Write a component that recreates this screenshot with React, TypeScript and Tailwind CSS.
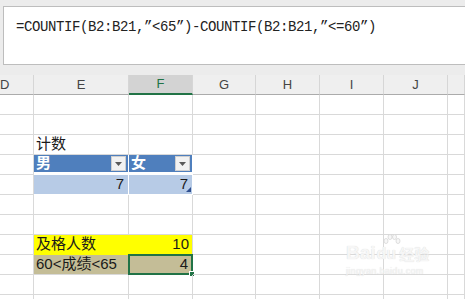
import React from "react";
import clsx from "clsx";

const widths = [
  "w-[34px]",
  "w-[95px]",
  "w-[64px]",
  "w-[63px]",
  "w-[64px]",
  "w-[64px]",
  "w-[64px]",
  "flex-1",
];

const letters = ["D", "E", "F", "G", "H", "I", "J", ""];

const cellFont = { fontFamily: '"Liberation Sans", "Noto Sans CJK SC", sans-serif' };

function Cell({
  col,
  className,
  children,
}: {
  col: number;
  className?: string;
  children?: React.ReactNode;
}) {
  return (
    <div
      className={clsx(
        "relative h-[20px] shrink-0 border-r border-b border-[#d9d9d9] flex items-center text-[15px] text-[#1a1a1a] overflow-visible whitespace-nowrap",
        widths[col],
        className
      )}
      style={cellFont}
    >
      {children}
    </div>
  );
}

function Row({ cells = {} }: { cells?: Record<number, { className?: string; content?: React.ReactNode }> }) {
  return (
    <div className="flex">
      {widths.map((_, i) => (
        <Cell key={i} col={i} className={cells[i]?.className}>
          {cells[i]?.content}
        </Cell>
      ))}
    </div>
  );
}

function Dropdown() {
  return (
    <div className="ml-auto mr-[2px] w-[15px] h-[15px] bg-[#f2f2f2] border border-[#cfcfcf] flex items-center justify-center">
      <svg width="7" height="4" viewBox="0 0 7 4">
        <path d="M0 0 L7 0 L3.5 4 Z" fill="#5a5a5a" />
      </svg>
    </div>
  );
}

export default function App() {
  return (
    <div className="relative w-[465px] h-[299px] overflow-hidden bg-white select-none">
      {/* formula bar */}
      <div className="bg-[#ececec] pt-[6px] pl-[3px] pb-[10px]">
        <div className="h-[59px] bg-white border border-r-0 border-[#bdbdbd] pl-[12px] pt-[6px]">
          <span
            className="text-[14px] tracking-[-0.4px] text-[#222]"
            style={{ fontFamily: '"Liberation Mono", "Noto Sans CJK SC", monospace' }}
          >
            =COUNTIF(B2:B21,”&lt;65”)-COUNTIF(B2:B21,”&lt;=60”)
          </span>
        </div>
      </div>

      {/* column headers */}
      <div className="flex h-[20px] bg-[#efefef]">
        {widths.map((w, i) => (
          <div
            key={i}
            className={clsx(
              "shrink-0 h-full flex items-center justify-center text-[13px] border-r border-[#d6d6d6]",
              w,
              i === 2
                ? "bg-[#d3d3d3] text-[#217346] border-b-2 border-b-[#217346]"
                : "text-[#444] border-b border-b-[#ababab]"
            )}
            style={{ fontFamily: '"Liberation Sans", sans-serif' }}
          >
            {i === 0 ? <span className="-ml-[60px] mr-auto pl-[60px]">{letters[i]}</span> : letters[i]}
          </div>
        ))}
      </div>

      <Row />
      <Row />
      <Row cells={{ 1: { className: "pl-[2px]", content: "计数" } }} />
      <Row
        cells={{
          1: {
            className: "bg-[#4f7fbd] border-white border-b-[3px] text-white pl-[2px]",
            content: (
              <>
                <span className="font-semibold">男</span>
                <Dropdown />
              </>
            ),
          },
          2: {
            className: "bg-[#4f7fbd] border-white border-b-[3px] text-white pl-[2px]",
            content: (
              <>
                <span className="font-semibold">女</span>
                <Dropdown />
              </>
            ),
          },
        }}
      />
      <Row
        cells={{
          1: { className: "bg-[#b7cbe6] border-white justify-end pr-[4px]", content: "7" },
          2: {
            className: "bg-[#b7cbe6] border-white justify-end pr-[4px]",
            content: (
              <>
                7
                <svg className="absolute right-[1px] bottom-[2px]" width="5" height="5" viewBox="0 0 5 5">
                  <path d="M5 0 L5 5 L0 5 Z" fill="#2f4f8f" />
                </svg>
              </>
            ),
          },
        }}
      />
      <Row />
      <Row />
      <Row
        cells={{
          1: { className: "bg-[#ffff00] border-[#ffff00] pl-[2px]", content: "及格人数" },
          2: { className: "bg-[#ffff00] border-r-[#d9d9d9] border-b-[#ffff00] justify-end pr-[3px]", content: "10" },
        }}
      />
      <Row
        cells={{
          1: { className: "bg-[#c4bd97] border-[#c4bd97] pl-[2px]", content: "60<成绩<65" },
          2: {
            className: "bg-[#c4bd97] border-[#c4bd97] justify-end pr-[4px]",
            content: (
              <>
                4
                <div className="absolute -left-[1px] -top-[1px] -right-[1px] -bottom-[1px] border-2 border-[#217346]" />
                <div className="absolute -right-[3px] -bottom-[3px] w-[6px] h-[6px] bg-[#217346] border border-white" />
              </>
            ),
          },
        }}
      />
      <Row />
      <Row />

      {/* watermark */}
      <div className="absolute left-[346px] top-[243px] pointer-events-none" style={cellFont}>
        <div className="flex items-end text-[#f6f6f6] [text-shadow:0_0_1px_#d4d4d4] font-bold leading-none">
          <span className="text-[19px]">Bai</span>
          <span className="relative text-[16px] ml-[1px]">
            <svg className="absolute left-[6px] -top-[12px]" width="18" height="13" viewBox="0 0 18 13">
              <g fill="#f7f7f7" stroke="#d6d6d6" strokeWidth="0.8">
                <ellipse cx="3" cy="7" rx="2" ry="2.5" />
                <ellipse cx="7" cy="3" rx="2" ry="2.5" />
                <ellipse cx="11.5" cy="3" rx="2" ry="2.5" />
                <ellipse cx="15" cy="7" rx="2" ry="2.5" />
              </g>
            </svg>
            du
          </span>
          <span className="text-[15px] ml-[3px]">经验</span>
        </div>
        <div className="text-[9px] text-[#f6f6f6] [text-shadow:0_0_1px_#d4d4d4] mt-[3px] tracking-[0.3px]">
          jingyan.baidu.com
        </div>
      </div>
    </div>
  );
}
